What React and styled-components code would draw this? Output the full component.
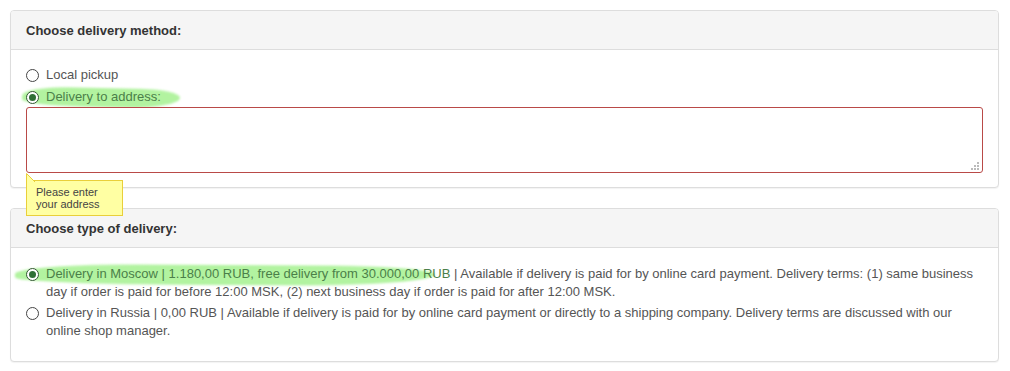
import React from 'react'
import styled, { createGlobalStyle } from 'styled-components'

const GlobalStyle = createGlobalStyle`
    * { box-sizing: border-box; }
    body {
        margin: 0;
        background: #fff;
        font-family: "Liberation Sans", Arial, sans-serif;
        font-size: 13px;
        color: #555;
    }
`;

const Page = styled.div`
    padding: 10px 11px 10px 10px;
    display: flex;
    flex-direction: column;
    gap: 20px;
`;

const Panel = styled.section`
    border: 1px solid #ddd;
    border-radius: 4px;
    background: #fff;
    box-shadow: 0 1px 1px rgba(0, 0, 0, 0.05);
`;

const PanelHeader = styled.div`
    height: 39px;
    display: flex;
    align-items: center;
    padding: 0 15px;
    background: #f5f5f5;
    border-bottom: 1px solid #ddd;
    border-radius: 3px 3px 0 0;
    h3 {
        margin: 0;
        font-size: 13px;
        font-weight: bold;
        color: #333;
    }
`;

const PanelBody = styled.div`
    padding: ${p => p.$pad || '16px 15px 14px'};
    display: flex;
    flex-direction: column;
    gap: ${p => p.$gap || 4}px;
`;

const Option = styled.label`
    position: relative;
    display: flex;
    align-items: flex-start;
    gap: 7px;
    line-height: 18px;
    color: #555;
    cursor: pointer;
`;

const Marker = styled.span`
    position: absolute;
    z-index: 0;
    left: ${p => p.$left}px;
    top: ${p => p.$top}px;
    width: ${p => p.$width}px;
    height: ${p => p.$height}px;
    background: #b2f3a0;
    border-radius: 35% 30% 40% 45% / 60% 50% 70% 40%;
    filter: blur(0.8px);
    transform: rotate(${p => p.$tilt || 0}deg);
`;

const Radio = styled.span`
    position: relative;
    z-index: 1;
    flex: none;
    width: 13px;
    height: 13px;
    margin-top: 3px;
    border-radius: 50%;
    border: 1px solid ${p => (p.$checked ? '#335533' : '#444')};
    background: #fff;
    display: flex;
    align-items: center;
    justify-content: center;
    &::after {
        content: '';
        width: 7px;
        height: 7px;
        border-radius: 50%;
        background: #2f6f35;
        display: ${p => (p.$checked ? 'block' : 'none')};
    }
`;

const Text = styled.span`
    position: relative;
    z-index: 1;
`;

const Green = styled.span`
    color: #4b7f49;
`;

const Field = styled.div`
    position: relative;
    margin-top: -3px;
`;

const Area = styled.textarea`
    display: block;
    width: 100%;
    height: 66px;
    border: 1px solid #b94a48;
    border-radius: 3px;
    resize: none;
    outline: none;
    font: inherit;
    padding: 4px 6px;
`;

const Grip = styled.svg`
    position: absolute;
    right: 3px;
    bottom: 2px;
`;

const Tip = styled.div`
    position: absolute;
    left: 0;
    top: calc(100% + 7px);
    z-index: 5;
    width: 97px;
    padding: 5px 9px 5px 9px;
    background: #ffffa3;
    border: 1px solid #e9cf3a;
    color: #444;
    font-size: 11px;
    line-height: 12px;
    svg {
        position: absolute;
        left: -1px;
        top: -8px;
    }
`;

function ResizeGrip() {
    const dots = [[6, 0], [3, 3], [6, 3], [0, 6], [3, 6], [6, 6]];
    return (
        <Grip width="9" height="9" viewBox="0 0 9 9">
            {dots.map(([x, y]) => (
                <rect key={`${x}-${y}`} x={x} y={y} width="2" height="2" fill="#bbb" />
            ))}
        </Grip>
    );
}

export default function App() {
    return (
        <>
            <GlobalStyle />
            <Page>
                <Panel>
                    <PanelHeader><h3>Choose delivery method:</h3></PanelHeader>
                    <PanelBody>
                        <Option>
                            <Radio />
                            <Text>Local pickup</Text>
                        </Option>
                        <Option>
                            <Marker $left={-4} $top={0} $width={158} $height={19} $tilt={1.2} />
                            <Radio $checked />
                            <Text><Green>Delivery to address:</Green></Text>
                        </Option>
                        <Field>
                            <Area />
                            <ResizeGrip />
                            <Tip>
                                <svg width="10" height="9" viewBox="0 0 10 9">
                                    <path d="M0.5 9 L0.5 0.5 L9 9 Z" fill="#ffffa3" />
                                    <path d="M0.5 9 L0.5 0.5 L9 9" fill="none" stroke="#e9cf3a" />
                                </svg>
                                Please enter your address
                            </Tip>
                        </Field>
                    </PanelBody>
                </Panel>

                <Panel>
                    <PanelHeader><h3>Choose type of delivery:</h3></PanelHeader>
                    <PanelBody $gap={3} $pad="17px 15px 21px">
                        <Option>
                            <Marker $left={-11} $top={0} $width={420} $height={20} $tilt={0.3} />
                            <Radio $checked />
                            <Text>
                                <Green>Delivery in Moscow | 1.180,00 RUB, free delivery from 30.000,00 RUB</Green>
                                {' '}| Available if delivery is paid for by online card payment. Delivery terms: (1) same business day if order is paid for before 12:00 MSK, (2) next business day if order is paid for after 12:00 MSK.
                            </Text>
                        </Option>
                        <Option>
                            <Radio />
                            <Text>
                                Delivery in Russia | 0,00 RUB | Available if delivery is paid for by online card payment or directly to a shipping company. Delivery terms are discussed with our online shop manager.
                            </Text>
                        </Option>
                    </PanelBody>
                </Panel>
            </Page>
        </>
    );
}
